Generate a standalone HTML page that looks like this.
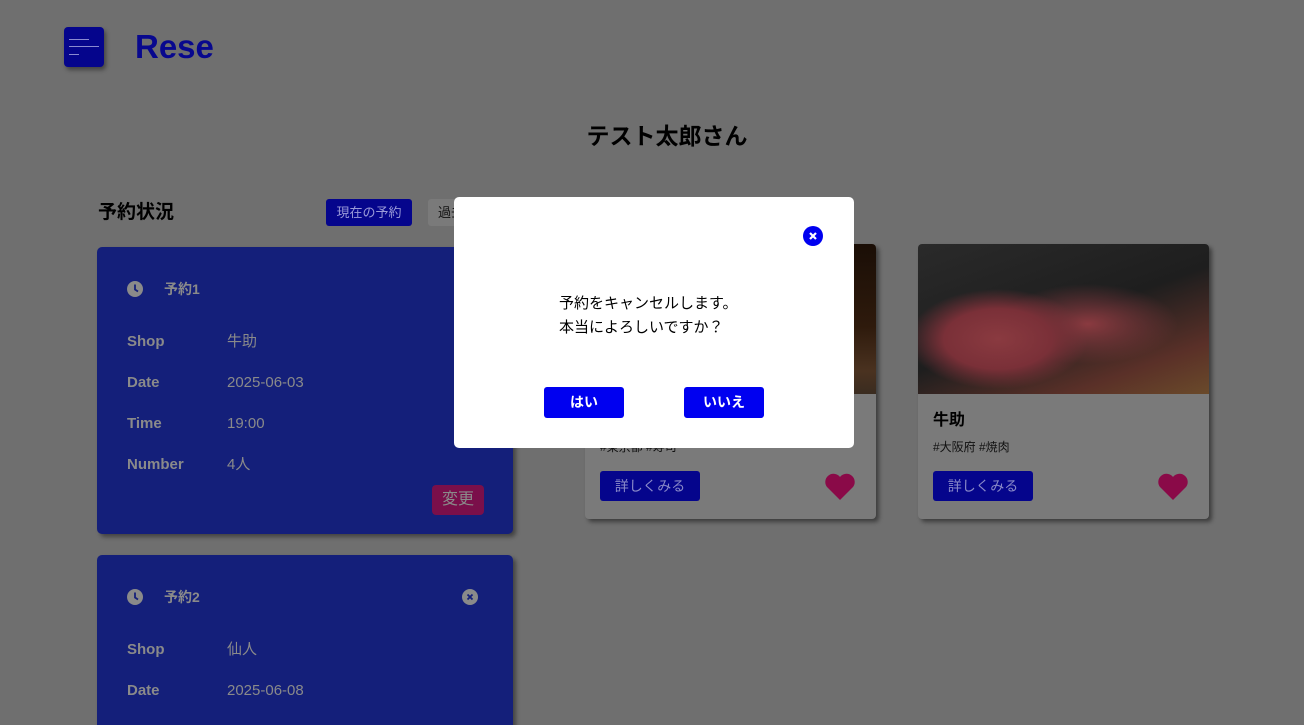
<!DOCTYPE html>
<html><head><meta charset="utf-8"><style>
*{margin:0;padding:0;box-sizing:border-box}
html,body{width:1304px;height:725px;overflow:hidden}
body{background:#6f6f6f;font-family:"Liberation Sans","Noto Sans CJK JP",sans-serif;position:relative}
.a{position:absolute}
.menu{left:64px;top:27px;width:40px;height:40px;background:#05058c;border-radius:4px;box-shadow:2px 3px 4px rgba(0,0,0,.4)}
.menu i{position:absolute;left:5px;height:1px;background:#8a8ad0}
.logo{left:135px;top:28px;font-size:33px;font-weight:bold;color:#08088e;line-height:38px}
.name{left:0;width:1334px;top:122px;text-align:center;font-size:23px;font-weight:bold;color:#000;line-height:28px}
.h2{left:98px;top:200px;font-size:19px;font-weight:bold;color:#000;line-height:26px}
.tab1{left:326px;top:199px;width:86px;height:27px;background:#05058c;border-radius:3px;color:#9a9ad8;font-size:13px;text-align:center;line-height:27px}
.tab2{left:428px;top:199px;width:40px;height:27px;background:#7a7a7a;border-radius:3px;color:#111;font-size:13px;line-height:27px;padding-left:10px}
.res{left:97px;width:416px;background:#141f7a;border-radius:5px;box-shadow:3px 3px 4px rgba(0,0,0,.4);color:#8a8a8a}
.res .t{position:absolute;left:67px;font-size:14px;font-weight:bold;line-height:16px}
.clock{position:absolute;left:30px;width:16px;height:16px}
.row{position:absolute;left:30px;font-size:15px;line-height:18px}
.row b{display:inline-block;width:100px}
.chg{position:absolute;right:29px;top:238px;width:52px;height:30px;background:#7a0f4a;border-radius:4px;color:#8a8a8a;text-align:center;line-height:30px;font-size:16px}
.card{top:244px;width:291px;height:275px;background:#7a7a7a;border-radius:4px;box-shadow:3px 3px 4px rgba(0,0,0,.45);overflow:hidden}
.card .img{height:150px}
.card h3{position:absolute;left:15px;top:167px;font-size:16px;color:#000;line-height:20px}
.card .tag{position:absolute;left:15px;top:195px;font-size:12px;color:#111;line-height:16px}
.card .btn{position:absolute;left:15px;top:227px;width:100px;height:30px;background:#05058c;border-radius:3px;color:#8a8ac8;font-size:14px;text-align:center;line-height:30px}
.card svg{position:absolute;right:20px;top:229px}
.modal{left:454px;top:197px;width:400px;height:251px;background:#fff;border-radius:5px}
.msg{position:absolute;left:105px;top:95px;font-size:15px;line-height:24px;color:#000}
.mb{position:absolute;top:190px;width:80px;height:31px;background:#0000f0;border-radius:3px;color:#fff;font-size:14px;font-weight:bold;text-align:center;line-height:31px}
</style></head><body>
<div class="a menu"><i style="top:12px;width:20px"></i><i style="top:19px;width:30px"></i><i style="top:27px;width:10px"></i></div>
<div class="a logo">Rese</div>
<div class="a name">テスト太郎さん</div>
<div class="a h2">予約状況</div>
<div class="a tab1">現在の予約</div>
<div class="a tab2">過去</div>

<div class="a res" style="top:247px;height:287px">
<svg class="clock" style="top:34px" viewBox="0 0 16 16"><circle cx="8" cy="8" r="8" fill="#8a8a8a"/><path d="M8 3.5V8.5L11 10.5" stroke="#141f7a" stroke-width="1.8" fill="none"/></svg><div class="t" style="top:34px">予約1</div>
<div class="row" style="top:86px"><b>Shop</b>牛助</div>
<div class="row" style="top:127px"><b>Date</b>2025-06-03</div>
<div class="row" style="top:168px"><b>Time</b>19:00</div>
<div class="row" style="top:209px"><b>Number</b>4人</div>
<div class="chg">変更</div>
</div>
<div class="a res" style="top:555px;height:200px">
<svg class="clock" style="top:34px" viewBox="0 0 16 16"><circle cx="8" cy="8" r="8" fill="#8a8a8a"/><path d="M8 3.5V8.5L11 10.5" stroke="#141f7a" stroke-width="1.8" fill="none"/></svg><div class="t" style="top:34px">予約2</div>
<svg style="position:absolute;left:365px;top:34px" width="16" height="16" viewBox="0 0 16 16"><circle cx="8" cy="8" r="8" fill="#8a8a8a"/><path d="M5.5 5.5L10.5 10.5M10.5 5.5L5.5 10.5" stroke="#141f7a" stroke-width="1.8"/></svg>
<div class="row" style="top:86px"><b>Shop</b>仙人</div>
<div class="row" style="top:127px"><b>Date</b>2025-06-08</div>
</div>

<div class="a card" style="left:585px">
<div class="img" style="background:linear-gradient(180deg,#1a0e06 0%,#2e1a0c 55%,#4a3220 85%,#3a2c20 100%)"></div>
<h3>仙人</h3><div class="tag">#東京都 #寿司</div><div class="btn">詳しくみる</div>
<svg width="32" height="28" viewBox="0 0 32 28"><path d="M16 27 L3 14 A7.5 7.5 0 0 1 16 4 A7.5 7.5 0 0 1 29 14 Z" fill="#8a0a48"/></svg>
</div>
<div class="a card" style="left:918px">
<div class="img" style="background:radial-gradient(ellipse 90px 50px at 80px 95px,#8a3a40 0%,#7a3038 60%,transparent 100%),radial-gradient(ellipse 90px 40px at 170px 80px,#8a3a40 0%,transparent 100%),linear-gradient(160deg,#2a2a2a 0%,#1e1e1e 50%,#5a3028 80%,#6a4a2a 100%)"></div>
<h3>牛助</h3><div class="tag">#大阪府 #焼肉</div><div class="btn">詳しくみる</div>
<svg width="32" height="28" viewBox="0 0 32 28"><path d="M16 27 L3 14 A7.5 7.5 0 0 1 16 4 A7.5 7.5 0 0 1 29 14 Z" fill="#8a0a48"/></svg>
</div>

<div class="a modal">
<svg style="position:absolute;left:349px;top:29px" width="20" height="20" viewBox="0 0 20 20"><circle cx="10" cy="10" r="10" fill="#0000f0"/><path d="M7 7L13 13M13 7L7 13" stroke="#fff" stroke-width="2.2"/></svg>
<div class="msg">予約をキャンセルします。<br>本当によろしいですか？</div>
<div class="mb" style="left:90px">はい</div>
<div class="mb" style="left:230px">いいえ</div>
</div>
</body></html>
